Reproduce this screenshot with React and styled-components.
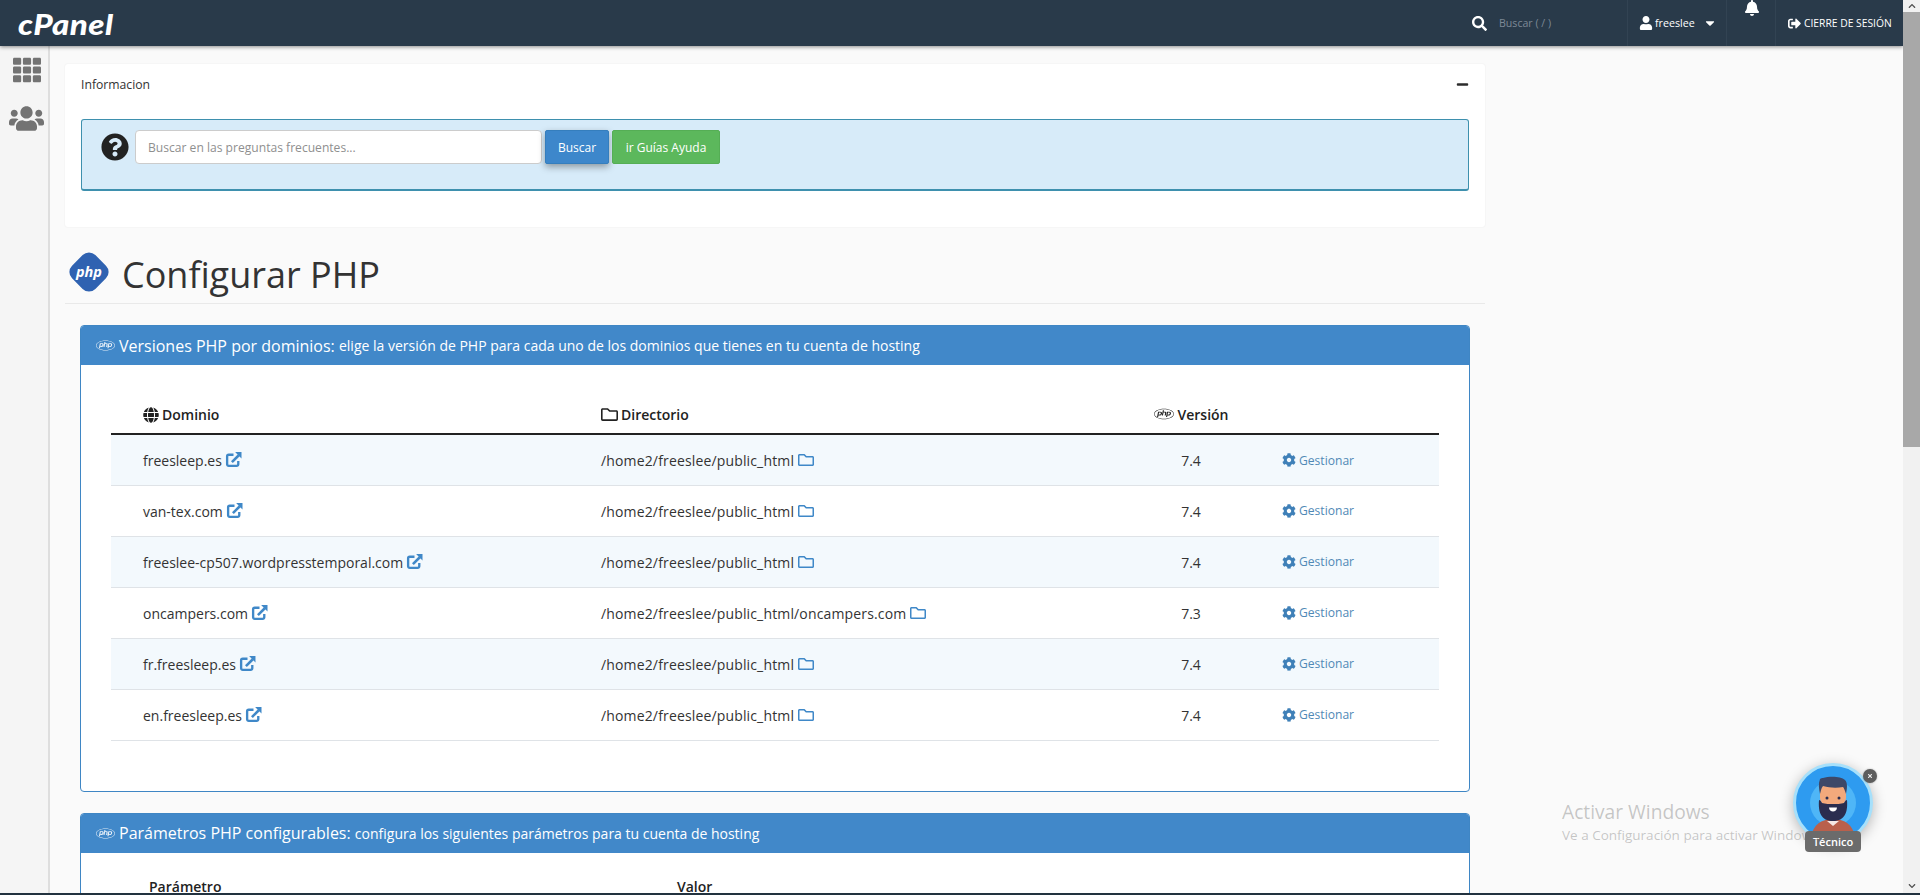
import React from "react";
import styled, { createGlobalStyle } from "styled-components";
import {
  FaTh, FaUsers, FaQuestionCircle, FaSearch, FaUser, FaBell, FaSignOutAlt, FaMinus,
  FaPhp, FaGlobe, FaRegFolder, FaCog, FaCaretDown, FaChevronUp, FaChevronDown, FaTimes,
} from "react-icons/fa";

const Global = createGlobalStyle`
  html, body { margin: 0; padding: 0; height: 895px; overflow: hidden; background: #fafafa; }
  body { font-family: "Open Sans", "Liberation Sans", sans-serif; color: #333; font-size: 14px; }
  * { box-sizing: border-box; }
`;

const Shell = styled.div`
  position: relative; width: 1920px; height: 895px; display: flex; flex-direction: column; overflow: hidden;
`;
const Frame = styled.div`display: flex; flex: 1; min-height: 0;`;
const Left = styled.div`flex: 1; min-width: 0; display: flex; flex-direction: column;`;
const TaskLine = styled.div`height: 2px; background: #22323f; flex: none;`;

const TopBar = styled.header`
  height: 46px; flex: none; background: #293a4a; display: flex; align-items: stretch; color: #fff;
  box-shadow: 0 1px 4px rgba(0,0,0,.45); position: relative; z-index: 2;
`;
const Logo = styled.div`
  padding-left: 18px; width: 1457px; display: flex; align-items: center;
  font-family: "Lato", sans-serif; font-weight: 900; font-style: italic; font-size: 29px;
  span { display: inline-block; letter-spacing: .4px; transform: scaleX(1.14); transform-origin: left center; }
`;
const SearchBox = styled.div`
  width: 170px; display: flex; align-items: center; gap: 12px; padding-left: 15px; font-size: 10.6px; color: #7d8996;
  svg { color: #fff; font-size: 15px; }
`;
const NavCell = styled.div`
  border-left: 1px solid #324353; display: flex; align-items: ${p => p.$top ? "flex-start" : "center"};
  width: ${p => p.$w}px; padding-left: ${p => p.$pad}px; gap: ${p => p.$gap || 2}px; font-size: ${p => p.$fs || 10.7}px; color: #fff;
`;
const Caret = styled(FaCaretDown)`margin-left: 6px; font-size: 14px;`;

const Body = styled.div`flex: 1; min-height: 0; display: flex;`;
const Side = styled.nav`
  width: 50px; flex: none; background: #f5f5f5; border-right: 2px solid #dedede; display: flex; flex-direction: column; align-items: center;
  padding-top: 10px; color: #737373; gap: 17px;
`;
const SideIcon = styled.span`display: flex; font-size: ${p => p.$s}px; margin-left: 5px;`;

const Main = styled.main`flex: 1; min-width: 0; padding: 18px 0 0 15px; overflow: hidden; background: #fafafa;`;
const Content = styled.div`width: 1420px;`;

const Card = styled.section`
  background: #fff; height: 163px; padding: 0 16px; border-radius: 3px; box-shadow: 0 0 2px rgba(0,0,0,.07);
`;
const CardHead = styled.div`height: 55px; display: flex; align-items: center; justify-content: space-between; font-size: 12.2px; color: #333;
  svg { font-size: 13px; color: #2c2c2c; margin-right: 0; margin-top: -14px; }
  span { margin-top: -15px; }
`;
const Alert = styled.div`
  height: 72px; background: #d7ebf9; border: 1px solid #3e90ae; border-bottom-width: 2px; border-radius: 3px; padding: 10px 0 0 19px;
  display: flex; align-items: flex-start;
`;
const HelpIcon = styled(FaQuestionCircle)`font-size: 28px; color: #222; margin-top: 3px; flex: none;`;
const SearchInput = styled.input`
  width: 407px; height: 34px; margin-left: 6px; padding: 0 12px; border: 1px solid #ccc; border-radius: 4px; background: #fff;
  font: 12.1px "Open Sans", sans-serif; color: #333; outline: none;
  &::placeholder { color: #8f8f8f; opacity: 1; }
`;
const Btn = styled.button`
  height: 34px; padding: 0; width: ${p => p.$w}px; margin-left: ${p => p.$ml}px; border: 1px solid ${p => p.$b}; border-radius: 2px; background: ${p => p.$bg};
  color: #fff; font: 12px "Open Sans", sans-serif; box-shadow: ${p => p.$shadow ? "0 3px 7px rgba(0,0,0,.35)" : "none"};
`;

const TitleRow = styled.div`
  margin-top: 25px; height: 52px; border-bottom: 1px solid #e9e9e9; display: flex; align-items: flex-start; padding-left: 4px; gap: 13px;
`;
const Title = styled.h1`
  margin: -3px 0 0; font-size: 36px; font-weight: 400; line-height: 52px; color: #333;
`;

const Panel = styled.section`
  margin: ${p => p.$top}px 15px 0 15px; width: 1390px; border: 1px solid #3f86c4; border-radius: 4px; background: #fff; overflow: hidden;
`;
const PanelHead = styled.div`
  height: 39px; background: #4188c9; color: #fff; display: flex; align-items: center; padding-left: 15px; font-size: 16px; white-space: pre;
  svg { font-size: 19px; margin-right: 4px; color: #e8f0f8; }
  small { font-size: 14px; }
`;
const PanelBody = styled.div`padding: ${p => p.$pt}px 30px 50px;`;
const Table = styled.table`width: 1328px; border-collapse: collapse; table-layout: fixed;`;
const Th = styled.th`
  height: 37px; border-bottom: 2px solid #222; font-size: 14px; font-weight: 600; color: #222; text-align: ${p => p.$center ? "center" : "left"};
  padding: 0 0 2px ${p => p.$pad ?? 32}px; vertical-align: ${p => p.$alignTop ? "top" : "middle"}; line-height: 19px;
  svg { font-size: ${p => p.$is || 16}px; margin-right: ${p => p.$gap ?? 3}px; vertical-align: -3px; }
`;
const Tr = styled.tr`background: ${p => p.$odd ? "#f3f9fd" : "#fff"};`;
const Td = styled.td`
  height: 51px; border-bottom: 1px solid #dfe3e7; font-size: 14px; color: #333; padding: 2px 0 0 ${p => p.$pad ?? 32}px;
  text-align: ${p => p.$center ? "center" : "left"}; vertical-align: middle; white-space: nowrap;
  letter-spacing: ${p => p.$track || 0}px;
`;
const ExtSvg = styled.svg`width: 17px; height: 17px; margin-left: 3px; vertical-align: -2px; color: #3f88c8;`;
const FolderIcon = styled(FaRegFolder)`font-size: 16px; color: #3f88c8; margin-left: 4px; vertical-align: -2px;`;
const Manage = styled.a`
  color: #5089b6; font-size: 12.1px; display: inline-flex; align-items: center; gap: 3px; padding-top: 1px;
  svg { font-size: 14px; color: #3f80b8; }
`;

const Scrollbar = styled.div`
  width: 17px; flex: none; background: #f1f1f1; display: flex; flex-direction: column; align-items: center; position: relative; z-index: 3;
`;
const Arrow = styled.div`height: ${p => p.$h}px; flex: none; display: flex; align-items: center; justify-content: center; font-size: 8px; color: #505050;`;
const Thumb = styled.div`width: 17px; height: 435px; background: #a8a8a8; flex: none;`;
const Track = styled.div`flex: 1;`;

const Watermark = styled.div`
  position: absolute; left: 1562px; top: 800px; color: rgba(110,110,110,.38); pointer-events: none; z-index: 6; white-space: nowrap;
  font-family: "Open Sans", sans-serif; line-height: 1.2;
  b { display: block; font-weight: 400; font-size: 19.2px; }
  span { font-size: 13.5px; display: block; margin-top: 4px; }
`;
const Widget = styled.div`position: absolute; left: 1793px; top: 763px; width: 80px; height: 90px; z-index: 5;`;
const Bubble = styled.div`
  width: 80px; height: 80px; border-radius: 50%; overflow: hidden; border: 3px solid #a6e0fb; background: #2e9bf0;
  box-shadow: 0 3px 14px rgba(0,0,0,.28);
`;
const TechLabel = styled.div`
  position: absolute; left: 12px; top: 68px; width: 56px; height: 21px; background: #6b6b6b; border-radius: 4px; color: #fff; font-size: 11px; font-weight: 600;
  display: flex; align-items: center; justify-content: center;
`;
const CloseDot = styled.div`
  position: absolute; left: 70px; top: 6px; width: 14px; height: 14px; border-radius: 50%; background: #5d5d5d; color: #eee; font-size: 6px;
  display: flex; align-items: center; justify-content: center; box-shadow: 0 0 2px rgba(0,0,0,.3);
`;

const PhpBadge = () => (
  <svg width="40" height="40" viewBox="0 0 40 40" style={{ flex: "none" }}>
    <rect x="3.5" y="3.500" width="33" height="33" rx="9" fill="#2f62b1" transform="rotate(45 20 20)" />
    <text x="20" y="24.5" textAnchor="middle" fontFamily="Open Sans, sans-serif" fontWeight="700" fontStyle="italic" fontSize="14.5" fill="#fff">php</text>
  </svg>
);

const ExtIcon = () => (
  <ExtSvg viewBox="0 0 16 16">
    <path d="M12.500 9.500v3a1.500 1.500 0 0 1-1.500 1.500H3.500A1.500 1.500 0 0 1 2 12.500V5a1.500 1.500 0 0 1 1.500-1.500H8" fill="none" stroke="currentColor" strokeWidth="2.200" />
    <path d="M6.500 10.500L13 4" fill="none" stroke="currentColor" strokeWidth="2.400" />
    <path d="M9.500 1h6v6z" fill="currentColor" />
  </ExtSvg>
);

const Avatar = () => (
  <svg width="74" height="74" viewBox="3 3 74 74" style={{ display: "block" }}>
    <circle cx="40" cy="40" r="23" fill="#4fb6f7" />
    <path d="M18 74c2-12 10-18 22-18s20 6 22 18z" fill="#b9604c" />
    <path d="M34 58l6 5 6-5z" fill="#fff" opacity=".85" />
    <rect x="27" y="20" width="26" height="24" rx="9" fill="#f3a97c" />
    <path d="M26 37c1 0 2 1 3 3 3 1 8 1 11 1s8 0 11-1c1-2 2-3 3-3 1 12-2 21-14 21S25 49 26 37z" fill="#2a2d4f" />
    <path d="M36 44.500h8c0 2.500-2 4-4 4s-4-1.500-4-4z" fill="#fff" />
    <circle cx="34" cy="35" r="1.500" fill="#2a2d4f" />
    <circle cx="46" cy="35" r="1.500" fill="#2a2d4f" />
    <path d="M27 31c-1-5-2-10 0-15 1-1 2-1 3-1 6-2 18-2 22 2 3 3 2 9 1 14-1-3-2-6-3-7-6 1-13 1-20-1-2 2-2 5-3 8z" fill="#3d4868" />
  </svg>
);

const rows = [
  ["freesleep.es", "/home2/freeslee/public_html", "7.4"],
  ["van-tex.com", "/home2/freeslee/public_html", "7.4"],
  ["freeslee-cp507.wordpresstemporal.com", "/home2/freeslee/public_html", "7.4"],
  ["oncampers.com", "/home2/freeslee/public_html/oncampers.com", "7.3"],
  ["fr.freesleep.es", "/home2/freeslee/public_html", "7.4"],
  ["en.freesleep.es", "/home2/freeslee/public_html", "7.4"],
];

export default function App() {
  return (
    <Shell>
      <Global />
      <Frame>
        <Left>
          <TopBar>
            <Logo><span>cPanel</span></Logo>
            <SearchBox><FaSearch /><span>Buscar ( / )</span></SearchBox>
            <NavCell $w={99} $pad={11}><FaUser style={{ fontSize: 14 }} /><span>freeslee</span><Caret /></NavCell>
            <NavCell $w={49} $pad={17} $top><FaBell style={{ fontSize: 16 }} /></NavCell>
            <NavCell $w={128} $pad={12} $fs={10.3} $gap={3}><FaSignOutAlt style={{ fontSize: 13 }} /><span>CIERRE DE SESIÓN</span></NavCell>
          </TopBar>
          <Body>
            <Side>
              <SideIcon $s={28}><FaTh /></SideIcon>
              <SideIcon $s={35}><FaUsers /></SideIcon>
            </Side>
            <Main>
              <Content>
                <Card>
                  <CardHead><span>Informacion</span><FaMinus /></CardHead>
                  <Alert>
                    <HelpIcon />
                    <SearchInput placeholder="Buscar en las preguntas frecuentes..." readOnly />
                    <Btn $w={64} $ml={3} $bg="#3d87cb" $b="#357ebd" $shadow>Buscar</Btn>
                    <Btn $w={108} $ml={3} $bg="#5cb85c" $b="#55ae55">ir Guías Ayuda</Btn>
                  </Alert>
                </Card>
                <TitleRow>
                  <PhpBadge />
                  <Title>Configurar PHP</Title>
                </TitleRow>
                <Panel $top={21}>
                  <PanelHead><FaPhp />Versiones PHP por dominios: <small>elige la versión de PHP para cada uno de los dominios que tienes en tu cuenta de hosting</small></PanelHead>
                  <PanelBody $pt={32}>
                    <Table>
                      <colgroup>
                        <col style={{ width: 458 }} /><col style={{ width: 540 }} /><col style={{ width: 164 }} /><col />
                      </colgroup>
                      <thead>
                        <tr>
                          <Th><FaGlobe />Dominio</Th>
                          <Th $is={17}><FaRegFolder />Directorio</Th>
                          <Th $pad={0} $center $is={20} $gap={4}><FaPhp style={{ verticalAlign: -4 }} />Versión</Th>
                          <Th $pad={9} />
                        </tr>
                      </thead>
                      <tbody>
                        {rows.map((r, i) => (
                          <Tr key={r[0]} $odd={i % 2 === 0}>
                            <Td>{r[0]}<ExtIcon /></Td>
                            <Td $track={0.15}>{r[1]}<FolderIcon /></Td>
                            <Td $pad={0} $center>{r[2]}</Td>
                            <Td $pad={9}><Manage><FaCog />Gestionar</Manage></Td>
                          </Tr>
                        ))}
                      </tbody>
                    </Table>
                  </PanelBody>
                </Panel>
                <Panel $top={21}>
                  <PanelHead><FaPhp />Parámetros PHP configurables: <small>configura los siguientes parámetros para tu cuenta de hosting</small></PanelHead>
                  <PanelBody $pt={24}>
                    <Table>
                      <colgroup><col style={{ width: 528 }} /><col /></colgroup>
                      <thead>
                        <tr>
                          <Th $pad={38} $alignTop>Parámetro</Th>
                          <Th $pad={38} $alignTop>Valor</Th>
                        </tr>
                      </thead>
                    </Table>
                  </PanelBody>
                </Panel>
              </Content>
            </Main>
          </Body>
        </Left>
        <Scrollbar>
          <Arrow $h={12}><FaChevronUp /></Arrow>
          <Thumb />
          <Track />
          <Arrow $h={14}><FaChevronDown /></Arrow>
        </Scrollbar>
      </Frame>
      <TaskLine />
      <Widget>
        <Bubble><Avatar /></Bubble>
        <TechLabel>Técnico</TechLabel>
        <CloseDot><FaTimes /></CloseDot>
      </Widget>
      <Watermark><b>Activar Windows</b><span>Ve a Configuración para activar Windows.</span></Watermark>
    </Shell>
  );
}
